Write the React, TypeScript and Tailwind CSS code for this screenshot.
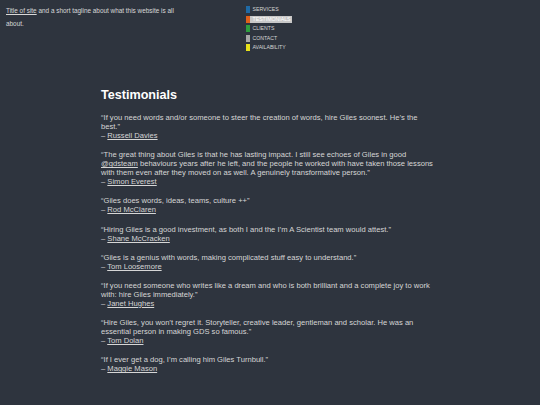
import React from "react";

const items = [
  { q: "“If you need words and/or someone to steer the creation of words, hire Giles soonest. He’s the best.”", a: "Russell Davies" },
  { q: null, a: "Simon Everest" },
  { q: "“Giles does words, ideas, teams, culture ++”", a: "Rod McClaren" },
  { q: "“Hiring Giles is a good investment, as both I and the I’m A Scientist team would attest.”", a: "Shane McCracken" },
  { q: "“Giles is a genius with words, making complicated stuff easy to understand.”", a: "Tom Loosemore" },
  { q: "“If you need someone who writes like a dream and who is both brilliant and a complete joy to work with: hire Giles immediately.”", a: "Janet Hughes" },
  { q: "“Hire Giles, you won’t regret it. Storyteller, creative leader, gentleman and scholar. He was an essential person in making GDS so famous.”", a: "Tom Dolan" },
  { q: "“If I ever get a dog, I’m calling him Giles Turnbull.”", a: "Maggie Mason" },
];

const nav = [
  { t: "SERVICES", c: "bg-[#1f6aa5]" },
  { t: "TESTIMONIALS", c: "bg-[#e0601a]", active: true },
  { t: "CLIENTS", c: "bg-[#2e9e3e]" },
  { t: "CONTACT", c: "bg-[#a8a8a8]" },
  { t: "AVAILABILITY", c: "bg-[#e6e01a]" },
];

export default function App() {
  return (
    <div className="min-h-[405px] w-[540px] bg-[#2e343e] text-[#d6d6d6]" style={{ fontFamily: '"Liberation Sans", Arial, sans-serif' }}>
      <header className="flex pt-[5px]">
        <p className="ml-[6px] w-[176px] text-[6.4px] leading-[12.5px] text-[#d8d8d8]">
          <a className="underline">Title of site</a> and a short tagline about what this website is all about.
        </p>
        <ul className="ml-[64px] mt-[1px] flex flex-col gap-[2.5px] text-[5.2px] leading-[7px]">
          {nav.map((n) => (
            <li key={n.t} className="flex items-stretch">
              <span className={`w-[4px] ${n.c}`} />
              <span className={`pl-[2.5px] pr-[1px] ${n.active ? "bg-[#c8c8c8] text-white" : ""}`}>{n.t}</span>
            </li>
          ))}
        </ul>
      </header>
      <main className="ml-[101px] mt-[36px] w-[335px] pb-[20px]">
        <h1 className="mb-[10px] text-[12.6px] font-bold leading-[16px] text-white">Testimonials</h1>
        <div className="flex flex-col gap-[10.2px] text-[7.6px] leading-[9px]">
          {items.map((it, i) => (
            <p key={i}>
              {it.q === null ? (
                <>
                  “The great thing about Giles is that he has lasting impact. I still see echoes of Giles in good{" "}
                  <a className="underline">@gdsteam</a> behaviours years after he left, and the people he worked with have taken those lessons with them even after they moved on as well. A genuinely transformative person.”
                </>
              ) : (
                it.q
              )}
              <br />– <a className="underline">{it.a}</a>
            </p>
          ))}
        </div>
      </main>
    </div>
  );
}
